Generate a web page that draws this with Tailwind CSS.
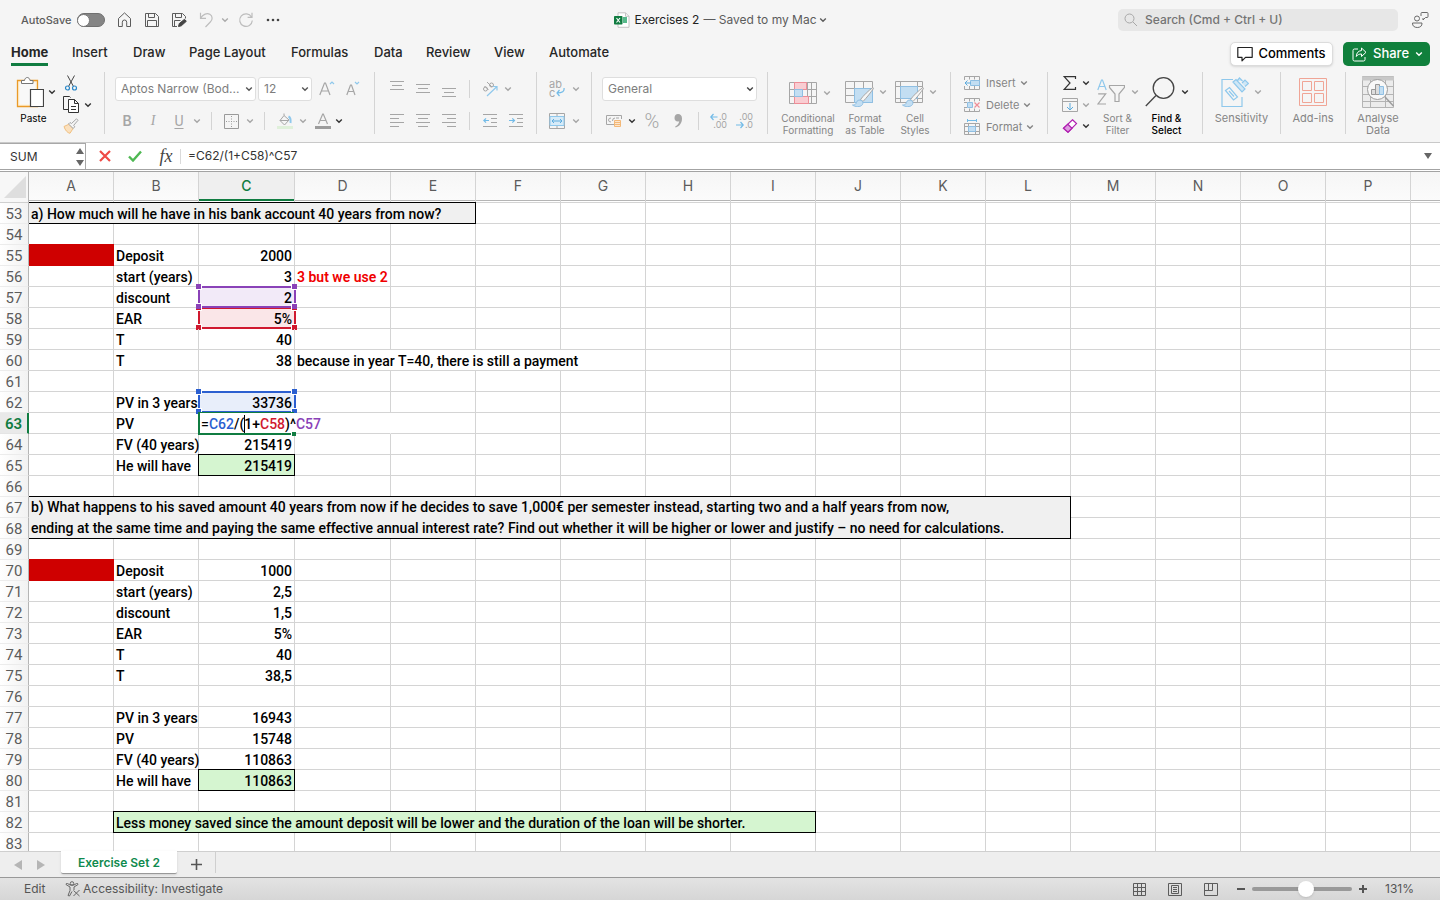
<!DOCTYPE html>
<html lang="en">
<head>
<meta charset="utf-8">
<title>Exercises 2</title>
<script src="https://cdn.jsdelivr.net/npm/@tailwindcss/browser@4"></script>
</head>
<body class="h-screen overflow-hidden flex flex-col bg-[#f5f5f5] text-[#262626] font-[Inter,'Liberation_Sans',sans-serif] text-[13px]">

<svg class="hidden">
  <symbol id="chev" viewBox="0 0 8 6"><path d="M1.200 1.500 4 4.300 6.800 1.500" fill="none" stroke="currentColor" stroke-width="1.400"/></symbol>
  <symbol id="brush" viewBox="0 0 24 22"><path d="M22 1.500C18 4 12 10 9.500 13.500l2.500 2C15.500 12 20.500 5.500 22.500 2.500z" fill="#f5f5f5" stroke="#a6a6a6"/><path d="M9 14c-3 0-3.500 2-4 3.500-.5 1-1.500 1.500-3.500 1.500 2.500 2 8 2.500 10-.5.8-1.500.3-3-.5-3.700z" fill="#c3def2" stroke="#8fbfe3"/></symbol>
</svg>

<!-- Title bar -->
<header class="h-10 shrink-0 flex items-center justify-between pl-[21px] pr-3 text-[#5c5c5c]">
  <div class="flex-1 flex items-center">
    <label for="autosave" class="w-14 text-[11px] font-medium">AutoSave</label>
    <input id="autosave" type="checkbox" class="appearance-none w-7 h-[14px] rounded-full bg-[#858585] border border-[#707070] flex items-center before:block before:size-[13px] before:-ml-px before:rounded-full before:bg-white before:border before:border-[#777]">
    <button aria-label="Home" class="ml-3 size-4"><svg viewBox="0 0 16 16" fill="none" stroke="#5c5c5c"><path d="M1.500 6.500 7.500.9l6 5.600v8H9.700v-4.300a2.200 2.200 0 0 0-4.400 0v4.300H1.500z" stroke-linejoin="round"/></svg></button>
    <button aria-label="Save" class="ml-[11px] size-4"><svg viewBox="0 0 16 16" fill="none" stroke="#5c5c5c"><path d="M1.500 1.500h10l3 3v10h-13zM4.500 1.500v4h6v-4M3.500 14.500v-6h9v6"/></svg></button>
    <button aria-label="Save as" class="ml-[11px] size-4"><svg viewBox="0 0 16 16" fill="none" stroke="#5c5c5c"><path d="M6 14.500H1.500v-13h10l3 3v2M4.500 1.500v4h6v-4M3.500 14.500v-6h6"/><path d="m7.500 14.500.8-3 5.200-4.200 1.800 2-5 4.500z" fill="#444" stroke="#444"/></svg></button>
    <button aria-label="Undo" class="ml-[11px] size-4"><svg viewBox="0 0 16 16" fill="none" stroke="#bdbdbd" stroke-width="1.200"><path d="M2.500.8v5.500H8M2.500 6.300C5 2 9 .8 11.800 2.300c3 1.800 3 5.400.5 7.700L7.500 15"/></svg></button>
    <svg class="ml-[7px] w-2 h-1.5 text-[#ababab]"><use href="#chev"/></svg>
    <button aria-label="Redo" class="ml-[9px] size-4"><svg viewBox="0 0 16 16" fill="none" stroke="#bdbdbd" stroke-width="1.200"><path d="M13.500 5A6.300 6.300 0 1 0 14.300 8.500M14 .8V5.300H9.600"/></svg></button>
    <button aria-label="More" class="ml-[11px] w-4 h-4"><svg viewBox="0 0 16 16" fill="#444"><circle cx="3" cy="8" r="1.300"/><circle cx="8" cy="8" r="1.300"/><circle cx="13" cy="8" r="1.300"/></svg></button>
  </div>
  <button class="flex items-center text-[12px] pr-2">
    <svg class="w-4 h-4 mr-1" viewBox="0 0 16 16"><path d="M4 .8h7.500L15 4.300v11H4z" fill="#fff" stroke="#c4c4c4"/><path d="M11.500.8v3.500H15" fill="none" stroke="#c4c4c4"/><path d="M9 6h4M9 8h4M9 10h4" stroke="#21a366" stroke-width="1.300"/><rect y="4" width="8.500" height="8.500" rx=".8" fill="#107c41"/><path d="m2.500 6 3.500 4.500M6 6l-3.500 4.500" stroke="#fff" stroke-width="1.100"/></svg>
    <span class="text-[#222]">Exercises 2</span><span class="ml-1">— Saved to my Mac</span>
    <svg class="ml-0.5 w-2 h-1.5"><use href="#chev"/></svg>
  </button>
  <div class="flex-1 flex items-center justify-end gap-[14px]">
    <label class="w-[280px] h-[22px] rounded-[5px] bg-[#e7e7e7] flex items-center pl-1.5 gap-[7px]">
      <svg class="size-[14px]" viewBox="0 0 14 14" fill="none" stroke="#a8a8a8"><circle cx="5.500" cy="5.500" r="4.500"/><path d="m9 9 4 4"/></svg>
      <input aria-label="Search" class="flex-1 bg-transparent text-[12px] font-medium placeholder:text-[#747474] outline-none" placeholder="Search (Cmd + Ctrl + U)">
    </label>
    <button aria-label="Presence" class="size-4"><svg class="overflow-visible" viewBox="0 0 16 16" fill="none" stroke="#6a6a6a"><circle cx="5" cy="6.500" r="2.500"/><path d="M.5 11h9.500c.2 3-1.800 4.500-4.700 4.500S.3 14 .5 11zM9 4V1.500q0-1 1-1h5q1 0 1 1v3q0 1-1 1h-1.500l-2.500 2.500v-2"/></svg></button>
  </div>
</header>

<!-- Ribbon tabs -->
<nav class="h-7 shrink-0 flex justify-between pl-[11px] pr-[10px]">
  <div class="grid grid-cols-[61px_61px_56px_102px_83px_52px_68px_55px_auto] leading-[25px] font-medium">
    <a href="#home" class="font-bold justify-self-start h-[26px] border-b-[3px] border-[#107c41]">Home</a>
    <a href="#insert">Insert</a><a href="#draw">Draw</a><a href="#layout">Page Layout</a><a href="#formulas">Formulas</a><a href="#data">Data</a><a href="#review">Review</a><a href="#view">View</a><a href="#automate">Automate</a>
  </div>
  <div class="flex gap-[10px] items-start pt-[2px] font-medium">
    <button class="h-6 w-[103px] rounded-[5px] bg-white border border-[#dcdcdc] shadow-sm text-black flex items-center justify-center gap-[5px]"><svg class="size-4 shrink-0" viewBox="0 0 16 16" fill="none" stroke="#222" stroke-width="1.200"><path d="M.8 1.500h14.400v9.800H8.500L5 14.800v-3.500H.8z" stroke-linejoin="round"/></svg>Comments</button>
    <button class="h-6 w-[87px] rounded-[5px] bg-[#10803c] text-white flex items-center pl-[9px]"><svg class="size-[15px] mr-1.5 shrink-0" viewBox="0 0 15 15" fill="none" stroke="#fff"><path d="M6 2H2.500Q1 2 1 3.500v9Q1 14 2.500 14h9q1.500 0 1.500-1.500V10"/><path d="M9.500 1v2.500C6 4 4.500 6 4.300 9.500 5.500 7.800 7 7 9.500 7v2.500l4.500-4.200z" stroke-linejoin="round"/></svg>Share<svg class="ml-1.5 w-2 h-1.5 shrink-0"><use href="#chev"/></svg></button>
  </div>
</nav>

<!-- Ribbon -->
<section class="h-[74px] shrink-0 flex pt-1 text-[11px] leading-3 text-[#858585] [&>div]:h-[62px] [&>div]:border-[#d4d4d4] [&>div]:border-r [&>div]:shrink-0 [&>div>div]:shrink-0 [&_button>*]:shrink-0">
  <div class="w-[105px] flex pl-4">
    <button class="w-[42px] text-black flex flex-col items-start">
      <span class="h-10 flex items-center"><svg class="w-7 h-8 shrink-0" viewBox="0 0 28 32" fill="none"><path d="M1.500 4.500h20v26h-20z" fill="#fff1d6" stroke="#ea9a28" stroke-width="1.300"/><path d="M3.500 6.500h16v22h-16z" fill="#f8f8f8"/><path d="M5.500 7.500v-3h3c.5-4 5-4 5.500 0h3v3z" fill="#fff" stroke="#777"/><path d="M14.500 13.500h13v17h-13z" fill="#fff" stroke="#444" stroke-width="1.200"/></svg><svg class="w-2 h-1.5 ml-1 shrink-0 text-[#333]"><use href="#chev"/></svg></span>
      <span class="w-[35px] text-center text-[10px]">Paste</span>
    </button>
    <div class="flex flex-col pl-[5px] pt-[3px] gap-[5px] text-[#333]">
      <button aria-label="Cut" class="h-4"><svg class="size-4" viewBox="0 0 16 16" fill="none"><path d="m4.500.5 6 11M11.500.5l-6 11" stroke="#444"/><circle cx="4.500" cy="13" r="2" stroke="#2b88c8" stroke-width="1.200"/><circle cx="11.500" cy="13" r="2" stroke="#2b88c8" stroke-width="1.200"/></svg></button>
      <button aria-label="Copy" class="h-[17px] flex items-center"><svg class="w-4 h-[17px]" viewBox="0 0 16 17" fill="none" stroke="#333"><path d="M5 13.500H.5V.5h6l1 1"/><path d="M5.500 3.500h6l4 4v9h-10zM11.500 3.500v4h4M8 10.500h5M8 13.500h5" fill="#fff"/></svg><svg class="w-2 h-1.5 ml-[5px]"><use href="#chev"/></svg></button>
      <button aria-label="Format painter" class="h-4"><svg class="size-4" viewBox="0 0 16 16" fill="none"><path d="m1 8.500 5-2.300 4 4.300-3 4.800C4.500 15 2 12 1 8.500z" fill="#fbe0bd" stroke="#f0c080"/><path d="m5.500 6 1.500-1.500 1.500 1L13.500.8l1.500 1.500-4.300 5 1 1.500-1.500 1.700z" fill="#f5f5f5" stroke="#a6a6a6"/></svg></button>
    </div>
  </div>

  <div class="w-[270px] pl-[10px] flex flex-col">
    <div class="h-[34px] flex items-center text-[12px]">
      <span class="relative w-[141px] mr-0.5"><select aria-label="Font" class="appearance-none w-full h-6 rounded-[3px] bg-white border border-[#dedede] pl-[5px] text-[#7d7d7d]"><option>Aptos Narrow (Bod...</option></select><svg class="absolute right-[3px] top-[9px] w-2 h-1.5 text-[#555]"><use href="#chev"/></svg></span>
      <span class="relative w-[54px] mr-[7px]"><select aria-label="Font size" class="appearance-none w-full h-6 rounded-[3px] bg-white border border-[#dedede] pl-[5px] text-[#7d7d7d]"><option>12</option></select><svg class="absolute right-[3px] top-[9px] w-2 h-1.5 text-[#555]"><use href="#chev"/></svg></span>
      <button aria-label="Increase font size"><svg class="w-4 h-4" viewBox="0 0 16 16" fill="none" stroke="#a6a6a6" stroke-width="1.200"><path d="M.8 14 5.500 2h1L11 14M2.500 10h7"/><path d="m11 3 2-2 2 2" stroke="#8fc8ec"/></svg></button>
      <button aria-label="Decrease font size" class="ml-[11px]"><svg class="w-4 h-4" viewBox="0 0 16 16" fill="none" stroke="#a6a6a6" stroke-width="1.200"><path d="M.8 14 4.500 4h1L9 14M2.200 10.500h5.500"/><path d="m9 1 2 2 2-2" stroke="#8fc8ec"/></svg></button>
    </div>
    <div class="h-[30px] flex items-center text-[#a6a6a6] text-[14px]">
      <button class="w-6 font-semibold">B</button>
      <button class="w-7 italic font-[Liberation_Serif,serif]">I</button>
      <button class="w-6 underline underline-offset-2 font-[Roboto,sans-serif]">U</button>
      <svg class="ml-0.5 w-2 h-1.5"><use href="#chev"/></svg>
      <span class="ml-[10px] w-px h-[18px] bg-[#d4d4d4]"></span>
      <button aria-label="Borders" class="ml-3"><svg class="size-[15px]" viewBox="0 0 15 15" fill="none" stroke="#9a9a9a"><path d="M.5.5h14v14H.5z"/><path d="M7.500 2v12M2 7.500h12" stroke-dasharray="1 1.500"/></svg></button>
      <svg class="ml-[7px] w-2 h-1.5"><use href="#chev"/></svg>
      <span class="ml-[10px] w-px h-[18px] bg-[#d4d4d4]"></span>
      <button aria-label="Fill colour" class="ml-3"><svg class="size-4" viewBox="0 0 16 16" fill="none"><path d="m7 2.500 5 4.500-4.500 5-4.500-4.500zM7 2.500V.5M3 7.500h8.500" stroke="#a6a6a6"/><path d="M11.500 3.500c2 1 2.500 3 2 6.500" stroke="#8fc8ec" stroke-width="2"/><path d="M0 13h16v3H0z" fill="#dff0da"/></svg></button>
      <svg class="ml-[6px] w-2 h-1.5"><use href="#chev"/></svg>
      <button aria-label="Font colour" class="ml-2"><svg class="size-4" viewBox="0 0 16 16" fill="none"><path d="M3.500 11 7.700 1h.6l4.200 10M5 7.500h6" stroke="#a6a6a6" stroke-width="1.200"/><path d="M0 13h16v3H0z" fill="#9c9c9c"/></svg></button>
      <svg class="ml-1 w-2 h-1.5 text-[#333]"><use href="#chev"/></svg>
    </div>
  </div>

  <div class="w-[162px] pl-[15px] flex flex-col">
    <div class="h-[34px] flex items-center">
      <div class="flex gap-3 [&_svg]:w-[14px] [&_svg]:h-4">
        <button aria-label="Align top"><svg viewBox="0 0 14 16" stroke="#a6a6a6"><path d="M0 .5h14M2 4.500h10M0 8.500h14"/></svg></button>
        <button aria-label="Align middle"><svg viewBox="0 0 14 16" stroke="#a6a6a6"><path d="M0 3.500h14M2 7.500h10M0 11.500h14"/></svg></button>
        <button aria-label="Align bottom"><svg viewBox="0 0 14 16" stroke="#a6a6a6"><path d="M0 7.500h14M2 11.500h10M0 15.500h14"/></svg></button>
      </div>
      <span class="ml-[13px] w-px h-[18px] bg-[#d4d4d4]"></span>
      <button aria-label="Orientation" class="ml-3"><svg class="size-4" viewBox="0 0 16 16" fill="none" stroke="#a6a6a6"><circle cx="3.500" cy="8" r="2"/><path d="m2.500 5 4 4M5 1l5 5"/><circle cx="9.500" cy="4" r="2"/><path d="M5 15 15 5.500M11 5.500h4v4" stroke="#8fc8ec" stroke-width="1.200"/></svg></button>
      <svg class="ml-[6px] w-2 h-1.5 text-[#a6a6a6]"><use href="#chev"/></svg>
    </div>
    <div class="h-[30px] flex items-center">
      <div class="flex gap-3 [&_svg]:w-[14px] [&_svg]:h-[14px]">
        <button aria-label="Align left"><svg viewBox="0 0 14 14" stroke="#a6a6a6"><path d="M0 .5h14M0 4.500h9M0 8.500h14M0 12.500h9"/></svg></button>
        <button aria-label="Align centre"><svg viewBox="0 0 14 14" stroke="#a6a6a6"><path d="M0 .5h14M2 4.500h10M0 8.500h14M2 12.500h10"/></svg></button>
        <button aria-label="Align right"><svg viewBox="0 0 14 14" stroke="#a6a6a6"><path d="M0 .5h14M5 4.500h9M0 8.500h14M5 12.500h9"/></svg></button>
      </div>
      <span class="ml-[13px] w-px h-[18px] bg-[#d4d4d4]"></span>
      <button aria-label="Decrease indent" class="ml-[13px]"><svg class="w-[14px] h-[14px]" viewBox="0 0 14 14" fill="none" stroke="#a6a6a6"><path d="M0 .5h14M8 4.500h6M8 8.500h6M0 12.500h14"/><path d="M6 6.500H.8M3 4.300.8 6.500 3 8.700" stroke="#72bbe8" stroke-width="1.200"/></svg></button>
      <button aria-label="Increase indent" class="ml-3"><svg class="w-[14px] h-[14px]" viewBox="0 0 14 14" fill="none" stroke="#a6a6a6"><path d="M0 .5h14M8 4.500h6M8 8.500h6M0 12.500h14"/><path d="M0 6.500h5.500M3.300 4.300l2.200 2.200-2.200 2.200" stroke="#72bbe8" stroke-width="1.200"/></svg></button>
    </div>
  </div>

  <div class="w-[55px] pl-3 flex flex-col text-[#a6a6a6]">
    <div class="h-[34px] flex items-center">
      <button aria-label="Wrap text" class="text-[11px] leading-[9px] text-left w-4 h-[18px] relative">ab<br>c<svg class="absolute left-[7px] top-2 w-[9px] h-[9px]" viewBox="0 0 9 9" fill="none" stroke="#72bbe8"><path d="M8 0q1 5-7 5M3.500 2 1 5l2.500 3" stroke-width="1.200"/></svg></button>
      <svg class="ml-[7px] w-2 h-1.5"><use href="#chev"/></svg>
    </div>
    <div class="h-[30px] flex items-center">
      <button aria-label="Merge cells"><svg class="size-4" viewBox="0 0 16 16" fill="none"><path d="M.5.5h15v15H.5zM8 .5v3M8 12.500v3" stroke="#a6a6a6"/><path d="M1 3.500h14v9H1z" fill="#d7ebf8" stroke="#8fc8ec"/><path d="M3 8h10M5 6 3 8l2 2M11 6l2 2-2 2" stroke="#5cabdd"/></svg></button>
      <svg class="ml-[7px] w-2 h-1.5"><use href="#chev"/></svg>
    </div>
  </div>

  <div class="w-[176px] pl-[10px] flex flex-col text-[#a6a6a6]">
    <div class="h-[34px] flex items-center text-[12px]">
      <span class="relative w-[155px]"><select aria-label="Number format" class="appearance-none w-full h-6 rounded-[3px] bg-white border border-[#dedede] pl-[5px] text-[#7d7d7d]"><option>General</option></select><svg class="absolute right-[3px] top-[9px] w-2 h-1.5 text-[#444]"><use href="#chev"/></svg></span>
    </div>
    <div class="h-[30px] flex items-center">
      <button aria-label="Currency" class="ml-1"><svg class="w-4 h-[14px]" viewBox="0 0 16 14" fill="none" stroke="#a6a6a6"><path d="M8 10.500H.5v-9h15V5M5 4Q2.500 4 2.500 6T5 8M9 4Q6.500 4 6.500 7M10 4h3"/><path d="M8.500 6.500h6v6h-6zM8.500 8.500h6M8.500 10.500h6" fill="#fde6cd" stroke="#f3b878"/></svg></button>
      <svg class="ml-1.5 w-2 h-1.5 text-[#333]"><use href="#chev"/></svg>
      <button aria-label="Percent" class="ml-2 w-4 text-[20px] leading-5 font-[Roboto,sans-serif] font-light">%</button>
      <button aria-label="Comma" class="ml-[14px]"><svg class="w-2 h-[14px]" viewBox="0 0 8 14"><path d="M4 0c2.500 0 4 1.700 4 4.500C8 9 5.500 12.500 1.500 13.500l-.3-1C3.500 11.500 5 9.500 5.200 7.300 2.500 8.300.5 6.500.5 4 .5 1.500 2 0 4 0z" fill="#a6a6a6"/></svg></button>
      <span class="ml-4 w-px h-[18px] bg-[#d4d4d4]"></span>
      <button aria-label="Increase decimal" class="ml-3 w-4 text-[9px] leading-2 text-right relative">.0<br>.00<svg class="absolute -left-px top-0 w-2 h-2" viewBox="0 0 8 8" fill="none" stroke="#72bbe8"><path d="M7.500 4H1M3.500 1 .8 4l2.700 3" stroke-width="1.200"/></svg></button>
      <button aria-label="Decrease decimal" class="ml-[10px] w-4 text-[9px] leading-2 text-right relative">.00<br>.0<svg class="absolute -left-px bottom-0 w-2 h-2" viewBox="0 0 8 8" fill="none" stroke="#72bbe8"><path d="M0 4h7M4.500 1l2.700 3-2.700 3" stroke-width="1.200"/></svg></button>
    </div>
  </div>

  <div class="w-[183px] pl-[9px] flex">
    <button class="w-[62px] flex flex-col items-center">
      <span class="h-[38px] mt-0.5 flex items-center pl-1"><svg class="w-7 h-6" viewBox="0 0 28 24" fill="none"><path d="M.5 1.500h27v21H.5zM.5 8.500h27M.5 15.500h27M5.500 1.500v21M18.500 1.500v21M22.500 1.500v21" stroke="#a6a6a6"/><path d="M5.500 1.500h12v7h-12zM5.500 15.500h14v7h-14z" fill="#f9cdd2" stroke="#ee8d97"/><path d="M5.500 8.500h8v7h-8z" fill="#c3def2" stroke="#8fbfe3"/></svg><svg class="ml-1.5 w-2 h-1.5 text-[#a6a6a6]"><use href="#chev"/></svg></span>
      <span class="text-[10px]">Conditional<br>Formatting</span>
    </button>
    <button class="w-[52px] flex flex-col items-center">
      <span class="h-[40px] flex items-center pl-0.5"><svg class="w-8 h-7 mt-0.5" viewBox="0 0 32 28" fill="none"><path d="M.5 2.500h27v21H.5zM.5 9.500h27M.5 16.500h27M9.500 2.500v21M18.500 2.500v21" stroke="#a6a6a6"/><path d="M9.500 9.500h18v14h-18z" fill="#c3def2" stroke="#8fbfe3"/><use href="#brush" x="6" y="7" width="24" height="22"/></svg><svg class="ml-0.5 w-2 h-1.5 text-[#a6a6a6]"><use href="#chev"/></svg></span>
      <span class="text-[10px]">Format<br>as Table</span>
    </button>
    <button class="w-[48px] flex flex-col items-center">
      <span class="h-[40px] flex items-center pl-0.5"><svg class="w-8 h-7 mt-0.5" viewBox="0 0 32 28" fill="none"><path d="M.5 2.500h27v21H.5zM.5 7.500h27M.5 19.500h27M5.500 2.500v21M22.500 2.500v21" stroke="#a6a6a6"/><path d="M5.500 7.500h17v12h-17z" fill="#c3def2" stroke="#8fbfe3"/><use href="#brush" x="6" y="7" width="24" height="22"/></svg><svg class="ml-0.5 w-2 h-1.5 text-[#a6a6a6]"><use href="#chev"/></svg></span>
      <span class="text-[10px]">Cell<br>Styles</span>
    </button>
  </div>

  <div class="w-[97px] pl-[13px] flex flex-col pt-[3px] gap-[6px] [&>button]:h-4 [&>button]:shrink-0 [&>button]:flex [&>button]:items-center">
    <button><svg class="w-4 h-[14px] mr-1.5" viewBox="0 0 16 14" fill="none"><path d="M.5 4V.5h15v13H.5V10M5.500.5v3M10.500.5v3M5.500 10v3.500M10.500 10v3.500" stroke="#a6a6a6"/><path d="M6.500 4.500h9v5h-9z" fill="#c3def2" stroke="#8fbfe3"/><path d="M7 7H1M3.500 4.500 1 7l2.500 2.500" stroke="#5cabdd"/></svg>Insert<svg class="ml-1 w-2 h-1.5"><use href="#chev"/></svg></button>
    <button><svg class="w-4 h-[14px] mr-1.5" viewBox="0 0 16 14" fill="none"><path d="M.5 3V.5h15V3M.5 10.500v3h15v-2M5.500.5v3M10.500.5v3M5.500 10.500v3M10.500 10.500v3M0 4.500h3M0 9.500h3" stroke="#a6a6a6"/><path d="M3.500 4.500h5v5h-5z" fill="#c3def2" stroke="#8fbfe3"/><path d="m10.500 4.500 5 5M15.500 4.500l-5 5" stroke="#ee8d97" stroke-width="1.200"/></svg>Delete<svg class="ml-1 w-2 h-1.5"><use href="#chev"/></svg></button>
    <button><svg class="w-4 h-[16px] mr-1.5" viewBox="0 0 16 16" fill="none"><path d="M.5 4.500h15v11H.5zM.5 7.500h15M.5 12.500h15M4.500 4.500v11M11.500 4.500v11" stroke="#a6a6a6"/><path d="M4.500 7.500h7v5h-7z" fill="#c3def2" stroke="#8fbfe3"/><path d="M3.500 1.500h9M3.500 0v3M12.500 0v3" stroke="#72bbe8"/></svg>Format<svg class="ml-1 w-2 h-1.5"><use href="#chev"/></svg></button>
  </div>

  <div class="w-[155px] pl-[14px] flex">
    <div class="w-7 flex flex-col pt-[3px] gap-[6px] text-[#333] [&>button]:h-4 [&>button]:flex [&>button]:items-center [&>button]:justify-between">
      <button aria-label="AutoSum"><svg class="w-4 h-[14px]" viewBox="0 0 16 14" fill="none" stroke="#333" stroke-width="1.200"><path d="M13.500 3V.6H2.200L8 7l-5.800 6.400h11.300V11"/></svg><svg class="w-2 h-1.5"><use href="#chev"/></svg></button>
      <button aria-label="Fill" class="text-[#a6a6a6]"><svg class="w-4 h-[14px]" viewBox="0 0 16 14" fill="none" stroke="#a6a6a6"><path d="M.5.5h15v13H.5zM.5 3.500h15"/><path d="M8 5v7M5 9l3 3 3-3" stroke="#5cabdd"/></svg><svg class="w-2 h-1.5"><use href="#chev"/></svg></button>
      <button aria-label="Clear"><svg class="w-4 h-[14px]" viewBox="0 0 16 14" fill="none" stroke="#b01eb0" stroke-width="1.200"><path d="m10.500.8 4 3.800-8.500 8.600-4.500-4z" fill="#fff"/><path d="m5.800 5.200 4.200 4-4 4-4.500-4z" fill="#dd9be0"/></svg><svg class="w-2 h-1.5"><use href="#chev"/></svg></button>
    </div>
    <button class="ml-0.5 w-[51px] flex flex-col items-center">
      <span class="h-[40px] flex items-center"><svg class="w-7 h-[26px]" viewBox="0 0 28 26" fill="none"><path d="m.8 11 3.700-10h1l3.700 10M2 7.500h6" stroke="#8fc8ec" stroke-width="1.200"/><path d="M1.200 14.800h7.500L1 25h8M12.500 6.500h15v2L22 15v7.500h-4V15l-5.500-6.500z" stroke="#a6a6a6" stroke-width="1.200"/></svg><svg class="ml-[6px] w-2 h-1.5 text-[#a6a6a6]"><use href="#chev"/></svg></span>
      <span class="text-[10px]">Sort &amp;<br>Filter</span>
    </button>
    <button class="w-[47px] flex flex-col items-center text-black">
      <span class="h-[40px] flex items-center"><svg class="w-[30px] h-[30px] shrink-0" viewBox="0 0 30 30" fill="none" stroke="#444" stroke-width="1.300"><circle cx="18.500" cy="11" r="10.300"/><path d="M11 18.500.8 29"/></svg><svg class="ml-[6px] w-2 h-1.5 shrink-0 text-[#333]"><use href="#chev"/></svg></span>
      <span class="text-[10px] font-medium">Find &amp;<br>Select</span>
    </button>
  </div>

  <div class="w-[78px]">
    <button class="w-full flex flex-col items-center">
      <span class="h-[40px] flex items-center"><svg class="w-7 h-[30px]" viewBox="0 0 28 30" fill="none" stroke="#8fc8ec" stroke-width="1.200"><path d="M12 2.500H1v27h20V20"/><path d="m4.500 13.500 4-3 8 9.500-4 3zM8 14l5 5.500" /><path d="m12 5 3-2.500L24 12l-3 3zM16 4l2.500-3 3 3M21 6l3-3 3.500 3.500-3.500 3" fill="#cfe7f6"/></svg><svg class="ml-[5px] w-2 h-1.5 text-[#a6a6a6]"><use href="#chev"/></svg></span>
      <span>Sensitivity</span>
    </button>
  </div>
  <div class="w-[65px]">
    <button class="w-full flex flex-col items-center">
      <span class="h-[40px] flex items-center"><svg class="size-7" viewBox="0 0 28 28" fill="none" stroke="#f0a596"><path d="M.5.5h27v27H.5zM3.500 3.500h9v9h-9zM15.500 3.500h9v9h-9zM3.500 15.500h9v9h-9zM15.500 15.500h9v9h-9z"/></svg></span>
      <span>Add-ins</span>
    </button>
  </div>
  <div class="w-[64px] border-r-0!">
    <button class="w-full flex flex-col items-center">
      <span class="h-[40px] flex items-center"><svg class="size-8" viewBox="0 0 32 32" fill="none" stroke="#b4b4b4"><path d="M.5.5h31v31H.5z" fill="#ececec"/><path d="M0 2.500h32" stroke-width="4" stroke="#c8c8c8"/><path d="M.5 10.500h31M.5 18.500h31M.5 25.500h31M8.500 4v28M23.500 4v28"/><circle cx="15.500" cy="13.500" r="10" fill="#f8f8f8" stroke="#9c9c9c"/><path d="m23 21 8.500 9" stroke="#9c9c9c" stroke-width="1.500"/><path d="M9.500 13.500h4v5h-4zM13.500 8.500h4v10h-4z" fill="#ddd" stroke="#999"/><path d="M17.500 10.500h4v8h-4z" fill="#c3def2" stroke="#8fbfe3"/></svg></span>
      <span>Analyse<br>Data</span>
    </button>
  </div>
</section>

<!-- Formula bar -->
<section class="h-[28px] shrink-0 flex items-center bg-white border-t border-[#c9c9c9] border-b border-b-[#a3a3a3]">
  <label class="h-full w-[86px] flex items-center justify-between border-t border-r border-[#a8a8a8] pl-[10px] pr-px">
    <input aria-label="Name box" value="SUM" class="w-14 text-[12px] text-[#333] outline-none">
    <svg class="w-2 h-[18px]" viewBox="0 0 8 18" fill="#666"><path d="M4 0l4 6H0zM0 12h8l-4 6z"/></svg>
  </label>
  <button aria-label="Cancel" class="ml-[13px]"><svg class="size-3" viewBox="0 0 12 12" stroke="#ef4a45" stroke-width="2.200"><path d="m1 1 10 10M11 1 1 11"/></svg></button>
  <button aria-label="Enter" class="ml-[17px]"><svg class="w-[14px] h-3" viewBox="0 0 14 12" fill="none" stroke="#4fb853" stroke-width="2.400"><path d="m1 6.500 4 4L13 1.500"/></svg></button>
  <button aria-label="Insert function" class="ml-4 w-4 text-[18px] leading-5 italic text-[#444] font-[Liberation_Serif,serif]">fx</button>
  <span class="ml-[6px] w-px h-[15px] bg-[#dadada]"></span>
  <input aria-label="Formula" value="=C62/(1+C58)^C57" class="ml-[7px] flex-1 text-[12px] text-[#333] outline-none">
  <button aria-label="Expand formula bar" class="mr-2"><svg class="w-2 h-1.5" viewBox="0 0 8 6" fill="#666"><path d="M0 0h8L4 6z"/></svg></button>
</section>

<!-- Worksheet -->
<main class="flex-1 min-h-0 overflow-hidden bg-white pt-px">
  <table class="table-fixed w-[1496px] border-separate border-spacing-0 border-t border-[#a3a3a3] font-[Roboto,'Liberation_Sans',sans-serif] font-medium text-[14px] text-black">
    <colgroup id="cols"></colgroup>
    <thead><tr id="head"></tr></thead>
    <tbody id="rows"></tbody>
  </table>
</main>

<!-- Sheet tabs -->
<nav class="h-[26px] shrink-0 flex items-start bg-[#eeeeee] border-t border-[#cfcfcf]">
  <button aria-label="Previous sheet" class="ml-[14px] mt-2"><svg class="w-2 h-[10px]" viewBox="0 0 8 10" fill="#b5b5b5"><path d="M8 0v10L0 5z"/></svg></button>
  <button aria-label="Next sheet" class="ml-[15px] mt-2"><svg class="w-2 h-[10px]" viewBox="0 0 8 10" fill="#b5b5b5"><path d="M0 0v10l8-5z"/></svg></button>
  <a href="#sheet" class="-mt-px ml-4 w-[116px] h-[23px] leading-6 rounded-b-[2px] bg-white border-b border-[#999] shadow-sm text-center text-[12px] font-semibold text-[#0f8a4e]">Exercise Set 2</a>
  <button aria-label="Add sheet" class="ml-[14px] mt-[7px]"><svg class="size-[11px]" viewBox="0 0 11 11" stroke="#555" stroke-width="1.600"><path d="M5.500 0v11M0 5.500h11"/></svg></button>
  <span class="ml-[13px] w-px h-[21px] bg-[#cfcfcf]"></span>
</nav>

<!-- Status bar -->
<footer class="h-[23px] shrink-0 flex items-center justify-between border-t border-[#999] bg-linear-to-b from-[#e3e3e3] to-[#d6d6d6] pl-6 pr-6 text-[12px] text-[#555]">
  <div class="flex items-center"><span class="w-[41px]">Edit</span>
    <button class="flex items-center"><svg class="size-4 mr-0.5" viewBox="0 0 16 16" fill="none" stroke="#666"><circle cx="7" cy="2.500" r="1.800"/><path d="M1 3.500 5 6v3.500L3 14.500l1.500.5L7 10.500M13 3.500 9 6v3M1 3.500q0-1.500 1.500-1L5 4h4l2.500-1.500q1.500-.5 1.500 1M8.500 9.500l6 5.500M14.500 9l-6 6"/></svg>Accessibility: Investigate</button>
  </div>
  <div class="flex items-center">
    <button aria-label="Normal view"><svg class="w-[13px] h-[13px]" viewBox="0 0 13 13" fill="none" stroke="#5c5c5c"><path d="M.5.5h12v12H.5zM.5 4.500h12M.5 8.500h12M4.500.5v12M8.500.5v12"/></svg></button>
    <button aria-label="Page layout view" class="ml-[22px]"><svg class="w-[14px] h-[13px]" viewBox="0 0 14 13" fill="none" stroke="#5c5c5c"><path d="M.5.5h13v12H.5zM3.500 2.500h7v8h-7zM5 4.500h4M5 6.500h4M5 8.500h4"/></svg></button>
    <button aria-label="Page break view" class="ml-[22px]"><svg class="w-[14px] h-[13px]" viewBox="0 0 14 13" fill="none" stroke="#5c5c5c"><path d="M.5.5h13v12H.5zM.5 7.500h8v-7M4.500.5v7"/></svg></button>
    <button aria-label="Zoom out" class="ml-[19px]"><svg class="w-2 h-2" viewBox="0 0 8 8" stroke="#555" stroke-width="2"><path d="M0 4h8"/></svg></button>
    <input aria-label="Zoom" type="range" min="0" max="100" value="55" class="appearance-none ml-[7px] w-[100px] h-4 bg-transparent [&::-webkit-slider-runnable-track]:h-1 [&::-webkit-slider-runnable-track]:rounded-full [&::-webkit-slider-runnable-track]:bg-[#999] [&::-webkit-slider-thumb]:appearance-none [&::-webkit-slider-thumb]:size-4 [&::-webkit-slider-thumb]:-mt-1.5 [&::-webkit-slider-thumb]:rounded-full [&::-webkit-slider-thumb]:bg-white [&::-webkit-slider-thumb]:shadow">
    <button aria-label="Zoom in" class="ml-[7px]"><svg class="w-2 h-2" viewBox="0 0 8 8" stroke="#555" stroke-width="2"><path d="M0 4h8M4 0v8"/></svg></button>
    <span class="ml-[18px] w-[31px]">131%</span>
  </div>
</footer>

<script>
const letters = 'ABCDEFGHIJKLMNOPQ'.split('');
const GREY = 'bg-[#f0f0f0]', GREEN = 'bg-[#d5f5d0]', RED = 'bg-[#cf0000]';
const box = '<span class="absolute -inset-px border border-black pointer-events-none"></span>';
const openBox = '<span class="absolute -inset-y-px left-0 -right-px border border-l-0 border-black pointer-events-none"></span>';
const redFill = '<span class="absolute -inset-y-px left-0 -right-px bg-[#cf0000]"></span>';

// Frame with corner handles round a cell that the edited formula refers to
const frame = (border, fill) => `<span class="absolute -top-px -bottom-px -left-px -right-[2px] border-2 pointer-events-none ${border}">
  <i class="absolute -left-[4px] -top-[4px] size-[6px] border-r border-b border-white ${fill}"></i><i class="absolute -right-[3px] -top-[4px] size-[6px] border-l border-b border-white ${fill}"></i>
  <i class="absolute -left-[4px] -bottom-[3px] size-[6px] border-r border-t border-white ${fill}"></i><i class="absolute -right-[3px] -bottom-[3px] size-[6px] border-l border-t border-white ${fill}"></i></span>`;

const cells = {
  A53: {t: 'a) How much will he have in his bank account 40 years from now?', span: 5, c: GREY, over: openBox},
  A55: {t: '', c: RED, over: redFill},
  B55: {t: 'Deposit'}, C55: {t: '2000'},
  B56: {t: 'start (years)'}, C56: {t: '3'}, D56: {t: '<span class="text-[#f00000] font-semibold">3 but we use 2</span>'},
  B57: {t: 'discount'}, C57: {t: '2', c: 'bg-[#f2eaf8] z-10', over: frame('border-[#8a42b8]', 'bg-[#8a42b8]')},
  B58: {t: 'EAR'}, C58: {t: '5%', c: 'bg-[#fae6e8]', over: frame('border-[#d0192f]', 'bg-[#d0192f]')},
  B59: {t: 'T'}, C59: {t: '40'},
  B60: {t: 'T'}, C60: {t: '38'}, D60: {t: 'because in year T=40, there is still a payment', span: 4},
  B62: {t: 'PV in 3 years'}, C62: {t: '33736', c: 'bg-[#e8eefa]', over: frame('border-[#2b5fd0]', 'bg-[#2b5fd0]')},
  B63: {t: 'PV'},
  C63: {span: 2, left: true, c: 'bg-white z-10 border-r-white',
    t: '=<span class="text-[#2b5fd0]">C62</span>/(<span class="relative"><i class="absolute left-0 -top-px w-px h-[19px] bg-black"></i>1</span>+<span class="text-[#d0192f]">C58</span>)^<span class="text-[#8a42b8]">C57</span>',
    over: '<span class="absolute -left-px -top-px -bottom-0.5 w-[96px] border-l-2 border-b-2 border-t border-[#107c41] pointer-events-none"><i class="absolute -right-0.5 -bottom-[3px] size-[5px] bg-[#107c41] border-t border-l border-white"></i></span>'},
  B64: {t: 'FV (40 years)'}, C64: {t: '215419'},
  B65: {t: 'He will have'}, C65: {t: '215419', c: GREEN, over: box},
  A67: {t: 'b) What happens to his saved amount 40 years from now if he decides to save 1,000€ per semester instead, starting two and a half years from now,<br>ending at the same time and paying the same effective annual interest rate? Find out whether it will be higher or lower and justify – no need for calculations.', span: 12, rows: 2, c: GREY, over: openBox},
  A70: {t: '', c: RED, over: redFill},
  B70: {t: 'Deposit'}, C70: {t: '1000'},
  B71: {t: 'start (years)'}, C71: {t: '2,5'},
  B72: {t: 'discount'}, C72: {t: '1,5'},
  B73: {t: 'EAR'}, C73: {t: '5%'},
  B74: {t: 'T'}, C74: {t: '40'},
  B75: {t: 'T'}, C75: {t: '38,5'},
  B77: {t: 'PV in 3 years'}, C77: {t: '16943'},
  B78: {t: 'PV'}, C78: {t: '15748'},
  B79: {t: 'FV (40 years)'}, C79: {t: '110863'},
  B80: {t: 'He will have'}, C80: {t: '110863', c: GREEN, over: box},
  B82: {t: 'Less money saved since the amount deposit will be lower and the duration of the loan will be shorter.', span: 8, c: GREEN, over: box}
};

document.getElementById('cols').innerHTML = '<col class="w-[29px]">' + letters.map(l =>
  l === 'C' || l === 'D' ? '<col class="w-[96px]">' : '<col class="w-[85px]">').join('');

document.getElementById('head').innerHTML =
  '<th class="p-0 h-[31px] border-b border-r border-b-[#cfcfcf] border-r-[#b5b5b5] bg-[#f7f7f7] align-top"><svg class="ml-1 mt-1 w-[22px] h-[22px]" viewBox="0 0 22 22" fill="#dedede"><path d="M22 0v22H0z"/></svg></th>' +
  letters.map(l => `<th class="p-0 h-[31px] border-b border-r border-[#d4d4d4] bg-white align-top font-normal text-[14px] font-[Inter,sans-serif]">` +
    (l === 'C' ? `<div class="h-[29px] leading-7 bg-[#efefef] border-b-2 border-[#107c41] text-[#107c41] font-medium">C</div>`
               : `<div class="h-[29px] leading-7 bg-linear-to-b from-[#f6f6f6] to-[#fbfbfb] border-b border-[#b5b5b5] text-[#5c5c5c]">${l}</div>`) + '</th>').join('');

let html = '';
let skip = 0;
for (let r = 53; r <= 83; r++) {
  html += r === 63
    ? `<tr><th class="px-0 pb-0 pt-0.5 h-[21px] leading-[18px] text-[15px] border-b border-r-2 border-b-[#e4e4e4] border-r-[#107c41] bg-[#e9e9e9] text-[#107c41] font-semibold">${r}</th>`
    : `<tr><th class="px-0 pb-0 pt-0.5 h-[21px] leading-[18px] text-[15px] border-b border-r border-b-[#ececec] border-r-[#b5b5b5] bg-linear-to-r from-white to-[#f2f2f2] text-[#5c5c5c] font-normal">${r}</th>`;
  for (let i = skip; i < letters.length;) {
    const d = cells[letters[i] + r];
    if (!d) { html += '<td class="p-0 h-[21px] border-b border-r border-[#d4d4d4]"></td>'; i++; continue; }
    const side = letters[i] === 'C' && !d.left ? 'text-right' : 'text-left';
    const lines = d.rows ? 'pt-0 leading-[21px]' : d.left ? 'pt-px leading-[18px]' : 'pt-0.5 leading-[18px]';
    html += `<td colspan="${d.span || 1}" rowspan="${d.rows || 1}" class="relative px-0.5 pb-0 h-[21px] whitespace-nowrap border-b border-r border-[#d4d4d4] ${lines} ${side} ${d.c || ''}">` +
      `${d.rows ? '<div class="-mb-px">' + d.t + '</div>' : d.t}${d.over || ''}</td>`;
    i += d.span || 1;
  }
  skip = r === 67 ? 12 : 0;
  html += '</tr>';
}
document.getElementById('rows').innerHTML = html;
</script>
</body>
</html>
